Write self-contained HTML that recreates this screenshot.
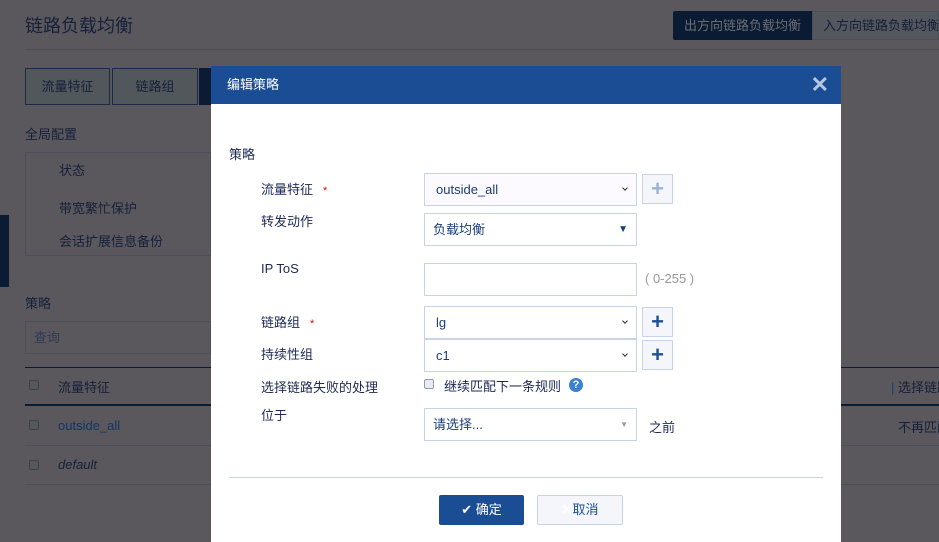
<!DOCTYPE html>
<html style="background:#5a585c"><head><meta charset="utf-8"><style>
*{margin:0;padding:0;box-sizing:border-box}
html,body{background:#5a585c}
body{width:939px;height:542px;overflow:hidden;font-family:"Liberation Sans","Noto Sans CJK SC",sans-serif;font-size:13px;color:#15203a;position:relative}
.a{position:absolute}
.lbl{position:absolute;left:261px;font-size:13px;color:#1e2a55}
.star{color:#e00;font-size:11px;margin-left:10px}
.inp{position:absolute;left:424px;width:213px;height:33px;border:1px solid #c7d3e6;background:#fff;font-size:13px;color:#1b3c7a;padding-left:11px;line-height:31px}
.chev{position:absolute;right:9px;top:12px;width:4px;height:4px;border-right:1.5px solid #333;border-bottom:1.5px solid #333;transform:rotate(45deg)}
.plus{position:absolute;left:642px;width:31px;height:30px;border:1px solid #c7d3e6;background:#f4f6fc;color:#1e4f97;font-size:22px;font-weight:bold;text-align:center;line-height:28px}
.cb{position:absolute;left:29px;width:10px;height:10px;border:1px solid #3e4244;background:#55585a;border-radius:2px}
</style></head><body>
<div class="a" style="left:25px;top:12px;font-size:18px;color:#15203a">链路负载均衡</div>
<div class="a" style="left:25px;top:49px;width:914px;height:1px;background:#4a4d55"></div>
<div class="a" style="left:673px;top:11px;width:139px;height:29px;background:#0b1b33;color:#6a6d74;line-height:29px;text-align:center;border-radius:2px 0 0 2px">出方向链路负载均衡</div>
<div class="a" style="left:812px;top:11px;width:127px;height:29px;background:#54575d;border:1px solid #4a4f58;color:#15203a;line-height:27px;padding-left:10px;white-space:nowrap;overflow:hidden">入方向链路负载均衡</div>
<div class="a" style="left:25px;top:68px;width:85px;height:37px;border:1px solid #1a2b4a;background:#51575b;line-height:35px;text-align:center;color:#15203a">流量特征</div>
<div class="a" style="left:112px;top:68px;width:86px;height:37px;border:1px solid #1a2b4a;background:#51575b;line-height:35px;text-align:center;color:#15203a">链路组</div>
<div class="a" style="left:199px;top:68px;width:12px;height:37px;background:#0b1b33"></div>
<div class="a" style="left:25px;top:124px;font-size:13px">全局配置</div>
<div class="a" style="left:25px;top:152px;width:186px;height:104px;border:1px solid #4a4f58"></div>
<div class="a" style="left:59px;top:160px">状态</div>
<div class="a" style="left:59px;top:198px">带宽繁忙保护</div>
<div class="a" style="left:59px;top:231px">会话扩展信息备份</div>
<div class="a" style="left:0;top:215px;width:9px;height:72px;background:#0b1b33"></div>
<div class="a" style="left:25px;top:293px">策略</div>
<div class="a" style="left:25px;top:321px;width:186px;height:33px;border:1px solid #4a4f58;padding-left:8px;line-height:31px;color:#2d3a55">查询</div>
<div class="a" style="left:25px;top:367px;width:914px;height:1px;background:#0b1b33"></div>
<div class="a" style="left:25px;top:404px;width:914px;height:2px;background:#0b1b33"></div>
<div class="a" style="left:25px;top:445px;width:914px;height:1px;background:#4a4f58"></div>
<div class="a" style="left:25px;top:484px;width:914px;height:1px;background:#4a4f58"></div>
<div class="cb" style="top:380px"></div>
<div class="cb" style="top:420px"></div>
<div class="cb" style="top:460px"></div>
<div class="a" style="left:58px;top:377px">流量特征</div>
<div class="a" style="left:58px;top:418px;color:#123563">outside_all</div>
<div class="a" style="left:58px;top:457px;font-style:italic">default</div>
<div class="a" style="left:891px;top:377px;white-space:nowrap"><span style="color:#1b3c7a">|</span> 选择链路</div>
<div class="a" style="left:898px;top:417px;white-space:nowrap">不再匹配</div>

<div class="a" style="left:211px;top:66px;width:630px;height:476px;background:#fff">
<div style="height:38px;background:#1b4d95;color:#fff;font-size:13px;line-height:38px;padding-left:16px">编辑策略<span style="position:absolute;right:12px;top:0;font-size:22px;font-weight:bold;color:#b8c6e0">✕</span></div>
</div>
<div class="a" style="left:229px;top:144px;color:#1e2a55">策略</div>
<div class="lbl" style="top:179px">流量特征<span class="star">*</span></div>
<div class="lbl" style="top:211px">转发动作</div>
<div class="lbl" style="top:261px">IP ToS</div>
<div class="lbl" style="top:312px">链路组<span class="star">*</span></div>
<div class="lbl" style="top:344px">持续性组</div>
<div class="lbl" style="top:377px">选择链路失败的处理</div>
<div class="lbl" style="top:405px">位于</div>

<div class="inp" style="top:173px;background:#fdfaff">outside_all<span class="chev"></span></div>
<div class="plus" style="top:174px;color:#9cb3d6">+</div>
<div class="inp" style="top:213px;padding-left:8px">负载均衡<span style="position:absolute;right:8px;top:0;font-size:10px;color:#1b3c7a">▼</span></div>
<div class="inp" style="top:263px"></div>
<div class="a" style="left:645px;top:271px;color:#999">( 0-255 )</div>
<div class="inp" style="top:306px">lg<span class="chev"></span></div>
<div class="plus" style="top:307px">+</div>
<div class="inp" style="top:339px">c1<span class="chev"></span></div>
<div class="plus" style="top:340px">+</div>
<div class="a" style="left:424px;top:379px;width:10px;height:10px;border:1px solid #99a;background:#e8ebf2;border-radius:2px"></div>
<div class="a" style="left:444px;top:376px;color:#1e2a55">继续匹配下一条规则</div>
<div class="a" style="left:569px;top:378px;width:14px;height:14px;border-radius:50%;background:#3a7fd0;color:#fff;font-size:11px;font-weight:bold;text-align:center;line-height:14px">?</div>
<div class="inp" style="top:408px;padding-left:8px">请选择...<span style="position:absolute;right:8px;top:0;font-size:8px;color:#999">▼</span></div>
<div class="a" style="left:649px;top:417px;color:#1e2a55">之前</div>
<div class="a" style="left:229px;top:477px;width:594px;height:1px;background:#c9d4e3"></div>
<div class="a" style="left:439px;top:495px;width:85px;height:30px;background:#1b4d95;border-radius:2px;color:#fff;text-align:center;line-height:30px">✔ 确定</div>
<div class="a" style="left:537px;top:495px;width:86px;height:30px;background:#f4f6fc;border:1px solid #c7d3e6;border-radius:2px;color:#1b4d95;text-align:center;line-height:28px"><span style="color:#fff;font-weight:bold">✕</span>取消</div>
</body></html>
